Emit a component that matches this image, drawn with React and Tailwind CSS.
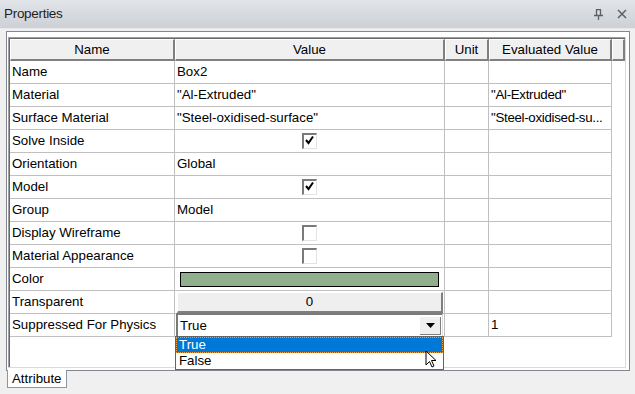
import React from 'react'

const rows = [
  { name: 'Name', value: 'Box2' },
  { name: 'Material', value: '"Al-Extruded"', evalv: '"Al-Extruded"' },
  { name: 'Surface Material', value: '"Steel-oxidised-surface"', evalv: '"Steel-oxidised-su...' },
  { name: 'Solve Inside', type: 'check', checked: true },
  { name: 'Orientation', value: 'Global' },
  { name: 'Model', type: 'check', checked: true },
  { name: 'Group', value: 'Model' },
  { name: 'Display Wireframe', type: 'check', checked: false },
  { name: 'Material Appearance', type: 'check', checked: false },
  { name: 'Color', type: 'color' },
  { name: 'Transparent', type: 'button' },
  { name: 'Suppressed For Physics', type: 'combo', evalv: '1' },
]

function CheckBox({ checked }) {
  return (
    <div className="w-[15px] h-[16px] bg-white border-t-2 border-l-2 border-t-[#7a7a7a] border-l-[#7a7a7a] border-r border-b border-r-[#e3e3e3] border-b-[#e3e3e3]">
      {checked && (
        <svg width="12" height="12" viewBox="0 0 12 12">
          <path d="M2 5 L4.5 8 L9 1.5" fill="none" stroke="#000" strokeWidth="2" />
        </svg>
      )}
    </div>
  )
}

function ValueCell({ row }) {
  if (row.type === 'check') {
    return (
      <div className="h-full flex items-center justify-center">
        <CheckBox checked={row.checked} />
      </div>
    )
  }
  if (row.type === 'color') {
    return (
      <div className="h-full flex items-center pl-[5px] pr-[5px]">
        <div className="w-full h-[15px] bg-[#8faf8d] border border-black" />
      </div>
    )
  }
  if (row.type === 'button') {
    return (
      <div className="h-full pl-[2px] pr-[1px] pt-[1px]">
        <div className="h-[21px] bg-[#efefef] border-t border-l border-white border-r-2 border-b-2 border-r-[#7f7f7f] border-b-[#7f7f7f] flex items-center justify-center">
          0
        </div>
      </div>
    )
  }
  if (row.type === 'combo') {
    return (
      <div className="h-full relative">
        <div className="h-[23px] -mt-px ml-px mr-px flex items-center bg-white border-t-2 border-l-2 border-t-[#7a7a7a] border-l-[#7a7a7a] border-r border-r-[#dcdcdc]">
          <span className="pl-[2px]">True</span>
          <div className="ml-auto h-[18px] w-[21px] mr-px bg-[#efefef] border-r border-b border-r-[#7f7f7f] border-b-[#7f7f7f] flex items-center justify-center">
            <svg width="9" height="5" viewBox="0 0 9 5">
              <path d="M0 0 H9 L4.5 5 Z" fill="#000" />
            </svg>
          </div>
        </div>
        <div className="absolute left-0 top-[23px] w-[269px] bg-white border border-[#646464] z-10">
          <div className="h-[16px] bg-[#0078d7] text-white border border-dotted border-[#f0a040] flex items-center pl-[2px]">
            True
          </div>
          <div className="h-[16px] flex items-center pl-[3px]">False</div>
        </div>
        <svg className="absolute left-[250px] top-[37px] z-20" width="14" height="20" viewBox="0 0 14 20">
          <path d="M1 1 L1 15 L4.5 11.5 L7 17 L9 16 L6.5 10.5 L11 10.5 Z" fill="#fff" stroke="#000" strokeWidth="1" />
        </svg>
      </div>
    )
  }
  return <div className="h-full flex items-center pl-[2px]">{row.value}</div>
}

export default function App() {
  return (
    <div className="w-[635px] h-[394px] bg-[#f0f0f0] overflow-hidden text-[13.3px] text-black font-['Liberation_Sans',Arial,sans-serif]">
      <div className="h-[29px] flex items-center pl-[4px] pr-[8px] bg-gradient-to-b from-[#e1e4e8] to-[#cdd1d6] border-b border-[#e6e8eb]">
        <span className="text-[13.5px] text-[#1e1e1e] tracking-[-0.3px]">Properties</span>
        <div className="ml-auto flex items-center gap-[14px]">
          <svg width="9" height="11" viewBox="0 0 9 11">
            <path d="M2 0.5 H7 M2.5 0.5 V6 M6.5 0.5 V6 M0 6.5 H9 M4.5 6.5 V11" fill="none" stroke="#5c5f63" strokeWidth="1.3" />
          </svg>
          <svg width="10" height="10" viewBox="0 0 10 10">
            <path d="M1 1 L9 9 M9 1 L1 9" stroke="#5c5f63" strokeWidth="1.5" />
          </svg>
        </div>
      </div>

      <div className="ml-[6px] mt-[2px] w-[624px] h-[340px] border border-[#828790] bg-white pt-[5px] pl-px">
        <div className="w-[618px] h-[331px] border-r border-b border-[#dadada] flex flex-col">
          <div className="flex-1 flex flex-col border-l border-t border-[#a0a0a0]">
            <div className="flex-1 flex flex-col border-l border-t border-[#696969]">
              <div className="flex h-[22px]">
                {[
                  ['Name', 'w-[165px]'],
                  ['Value', 'w-[270px]'],
                  ['Unit', 'w-[44px]'],
                  ['Evaluated Value', 'w-[123px]'],
                  ['', 'flex-1'],
                ].map(([label, w], i) => (
                  <div
                    key={i}
                    className={`${w} bg-[#f0f0f0] border-t border-l border-white border-r-2 border-b-2 border-r-[#808080] border-b-[#808080] flex items-center justify-center`}
                  >
                    {label}
                  </div>
                ))}
              </div>
              <div className="flex-1">
                {rows.map((row) => (
                  <div key={row.name} className="flex w-[602px] h-[23px] border-b border-[#c0c0c0]">
                    <div className="w-[165px] border-r border-[#c0c0c0] flex items-center pl-[2px] whitespace-nowrap">{row.name}</div>
                    <div className="w-[270px] border-r border-[#c0c0c0]">
                      <ValueCell row={row} />
                    </div>
                    <div className="w-[44px] border-r border-[#c0c0c0]" />
                    <div className="w-[123px] border-r border-[#c0c0c0] flex items-center pl-[2px] whitespace-nowrap overflow-hidden tracking-[-0.3px]">
                      {row.evalv}
                    </div>
                  </div>
                ))}
              </div>
            </div>
          </div>
        </div>
      </div>

      <div className="ml-[7px] -mt-px w-[60px] h-[18px] bg-white border-l border-r border-b border-[#8a96a3] flex items-center pl-[4px]">
        Attribute
      </div>
    </div>
  )
}
